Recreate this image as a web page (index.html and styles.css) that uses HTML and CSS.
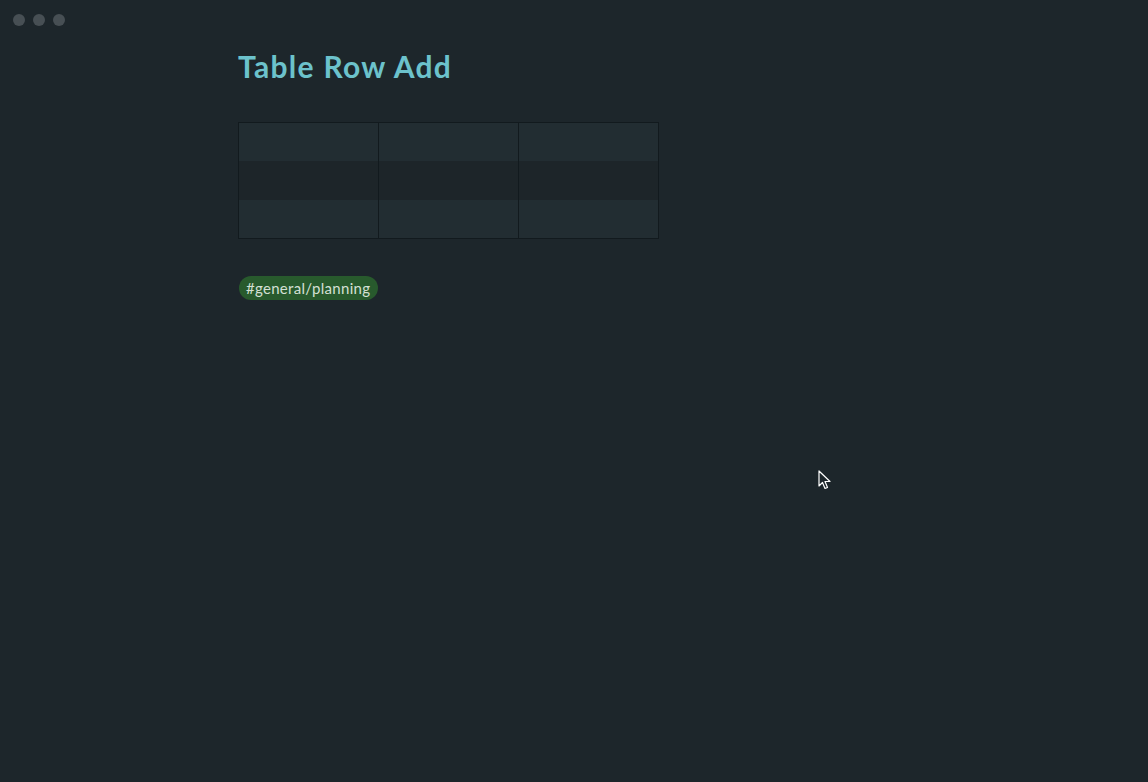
FILE: index.html
```html
<!DOCTYPE html>
<html>

<head>
    <meta charset="utf-8" />
    <title>Table Row Add</title>
    <link rel="stylesheet" href="styles.css">
</head>

<body>
    <div class="window">
        <div class="titlebar">
            <span class="dot"></span>
            <span class="dot"></span>
            <span class="dot"></span>
        </div>
        <div class="doc">
            <h1 class="title">Table Row Add</h1>
            <table class="grid">
                <tr class="row_light"><td></td><td></td><td></td></tr>
                <tr class="row_dark"><td></td><td></td><td></td></tr>
                <tr class="row_light"><td></td><td></td><td></td></tr>
            </table>
            <div class="tags">
                <span class="tag">#general/planning</span>
            </div>
        </div>
        <svg class="cursor" width="14" height="21" viewBox="0 0 14 21">
            <path d="M1 1 L1 16 L4.5 12.5 L7 18.5 L9.5 17.5 L7 11.5 L12 11.5 Z" fill="#1d262b" stroke="#ffffff" stroke-width="1.2" stroke-linejoin="round" />
        </svg>
    </div>
</body>

</html>
```

FILE: styles.css
```css
* {
    margin: 0;
    padding: 0;
    box-sizing: border-box;
}

html,
body {
    height: 100%;
}

body {
    background: #1d262b;
    font-family: 'Lato', 'Noto Sans', sans-serif;
    color: #d0dcd0;
}

.window {
    position: relative;
    height: 100%;
}

/* traffic lights */

.titlebar {
    display: flex;
    gap: 8px;
    padding: 14px 0 0 13px;
    height: 40px;
}

.dot {
    width: 12px;
    height: 12px;
    border-radius: 50%;
    background: #474f54;
}

/* document */

.doc {
    padding-left: 238px;
}

.title {
    font-size: 30px;
    font-weight: 700;
    color: #6cc2cc;
    line-height: 36px;
    margin-top: 8px;
    letter-spacing: 1.3px;
}

.grid {
    margin-top: 38px;
    border-collapse: collapse;
    border: 1px solid #121a1e;
}

.grid td {
    width: 140px;
    height: 38.5px;
    border-left: 1px solid #121a1e;
}

.grid td:first-child {
    border-left: none;
}

.row_light td {
    background: #222d32;
}

.row_dark td {
    background: #1d2529;
}

.tags {
    margin-top: 37px;
    display: flex;
}

.tag {
    background: #285a2d;
    color: #d4e0d4;
    font-size: 15px;
    letter-spacing: 0.3px;
    line-height: 24px;
    height: 24px;
    padding: 0 8px 0 7px;
    border-radius: 12px;
    margin-left: 1px;
}

.cursor {
    position: absolute;
    left: 818px;
    top: 470px;
}
```
